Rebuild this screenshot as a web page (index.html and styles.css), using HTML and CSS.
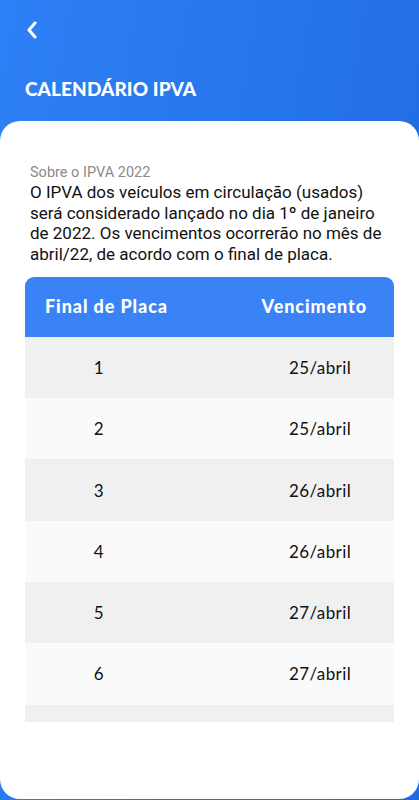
FILE: index.html
```html
<!DOCTYPE html>
<html lang="pt-BR">
<head>
<meta charset="utf-8">
<link rel="stylesheet" href="styles.css">
</head>
<body>
<div class="screen">
  <header class="top">
    <button class="back" aria-label="Voltar">
      <svg width="14" height="18" viewBox="0 0 14 18"><path d="M10 2 L4 9 L10 16" fill="none" stroke="#fff" stroke-width="3" stroke-linecap="round" stroke-linejoin="round"/></svg>
    </button>
    <h1 class="title">CALENDÁRIO IPVA</h1>
  </header>
  <main class="card">
    <p class="label">Sobre o IPVA 2022</p>
    <p class="text">O IPVA dos veículos em circulação (usados) será considerado lançado no dia 1º de janeiro de 2022. Os vencimentos ocorrerão no mês de abril/22, de acordo com o final de placa.</p>
    <div class="table">
      <div class="thead">
        <span>Final de Placa</span>
        <span>Vencimento</span>
      </div>
      <div class="tbody">
        <div class="row"><span>1</span><span>25/abril</span></div>
        <div class="row"><span>2</span><span>25/abril</span></div>
        <div class="row"><span>3</span><span>26/abril</span></div>
        <div class="row"><span>4</span><span>26/abril</span></div>
        <div class="row"><span>5</span><span>27/abril</span></div>
        <div class="row"><span>6</span><span>27/abril</span></div>
        <div class="row"></div>
      </div>
    </div>
  </main>
</div>
</body>
</html>
```
FILE: styles.css
```css
* { box-sizing: border-box; }
html, body { margin: 0; padding: 0; }
body {
  width: 419px;
  height: 800px;
  overflow: hidden;
  background: linear-gradient(100deg, #2e80f6 0%, #1f6ade 100%);
  font-family: "Roboto", sans-serif;
}
.screen {
  display: flex;
  flex-direction: column;
  height: 800px;
}
.top {
  padding: 20px 25px 0;
  height: 121px;
}
.back {
  display: block;
  padding: 0;
  border: 0;
  background: none;
  width: 14px;
  height: 20px;
}
.back svg { display: block; }
.title {
  margin: 37px 0 0;
  color: #fff;
  font-family: "Lato", sans-serif;
  font-weight: 900;
  font-size: 19px;
  letter-spacing: 0.1px;
  line-height: 24px;
}
.card {
  flex: 1;
  background: #fff;
  border-radius: 20px;
  margin-bottom: 1px;
  padding: 44px 29px 0 30px;
  display: flex;
  flex-direction: column;
}
.label {
  margin: 0;
  color: #8a8a8a;
  font-size: 14.5px;
  line-height: 16px;
}
.text {
  margin: 1px 0 0;
  color: #111;
  font-size: 17px;
  line-height: 20.7px;
}
.table {
  margin: 12px -4px 0 -5px;
  border-radius: 9px 9px 0 0;
  overflow: hidden;
  height: 445px;
  flex: none;
  font-family: "Lato", sans-serif;
}
.thead {
  height: 60px;
  background: #3a83f6;
  color: #fff;
  font-weight: 900;
  font-size: 18px;
  letter-spacing: 0.9px;
  display: flex;
  justify-content: space-between;
  align-items: center;
  padding: 0 27px 2px 20px;
}
.row {
  display: grid;
  grid-template-columns: 148px 148px;
  column-gap: 73px;
  align-items: center;
  height: 61.3px;
  font-size: 17px;
  letter-spacing: 0.4px;
  color: #111;
  text-align: center;
  background: #f0f0f0;
}
.row:nth-child(even) { background: #fafafa; }
```
